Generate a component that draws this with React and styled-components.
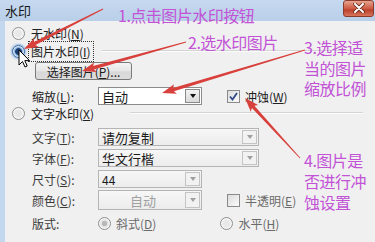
import React from 'react';
import styled, { createGlobalStyle } from 'styled-components';

const GlobalStyle = createGlobalStyle`
  body {
    margin: 0;
    background: #f0f0f0;
    font-family: "Noto Sans CJK SC", "Noto Sans", sans-serif;
  }
`;

const Window = styled.div`
  position: relative;
  width: 375px;
  height: 242px;
  overflow: hidden;
  display: flex;
  flex-direction: column;
  background: #c3d7ee;
`;

const TitleBar = styled.div`
  height: 21px;
  flex-shrink: 0;
  display: flex;
  align-items: center;
  padding: 0 1px 0 5px;
  background: linear-gradient(#c6d9ef, #b9cfe9);
`;

const Title = styled.span`
  font-size: 13px;
  color: #151515;
  line-height: 1;
`;

const CloseButton = styled.div`
  margin-left: auto;
  margin-top: -5px;
  width: 29px;
  height: 15px;
  border: 1px solid #8b3a2c;
  border-radius: 3px;
  background: linear-gradient(#e6a590, #cd5a43 50%, #b9412c 60%, #d8745a);
  display: flex;
  align-items: center;
  justify-content: center;
`;

const Body = styled.div`
  flex: 1;
  margin-left: 5px;
  background: #f0f0f0;
  display: flex;
  flex-direction: column;
  padding-top: 3px;
  font-size: 12px;
  color: #202020;
`;

const OptionRow = styled.div`
  height: ${p => p.$h || 18}px;
  margin-top: ${p => p.$mt || 0}px;
  display: flex;
  align-items: center;
  padding-left: 7px;
`;

const FieldRow = styled.div`
  height: ${p => p.$h || 18}px;
  margin-top: ${p => p.$mt || 0}px;
  display: flex;
  align-items: center;
  padding-left: 27px;
`;

const Label = styled.span`
  width: 66px;
  flex-shrink: 0;
  color: ${p => (p.$dim ? '#3a3a3a' : '#202020')};
  white-space: nowrap;
`;

const Text = styled.span`
  white-space: nowrap;
  color: ${p => (p.$dim ? '#6a6a6a' : '#202020')};
  margin-left: ${p => p.$ml || 0}px;
`;

const FocusText = styled.span`
  margin-left: 3px;
  padding: 1px 2px;
  border: 1px dotted #333;
  white-space: nowrap;
`;

const Radio = styled.span`
  width: 11px;
  height: 11px;
  flex-shrink: 0;
  border-radius: 50%;
  border: 1px solid ${p => (p.$on ? '#3a6aa6' : '#8e8f8f')};
  background: ${p =>
    p.$on
      ? 'radial-gradient(circle, #1d3f72 0 3px, #6a9bd2 3.5px, #d7e6f5 5px)'
      : p.$dis
      ? 'radial-gradient(circle, #b8b8b8 0 2.5px, #e2e2e2 3px, #f4f4f4 5px)'
      : 'radial-gradient(circle, #e8e8e8 0 3px, #f6f6f6 5px)'};
  box-shadow: ${p => (p.$on ? '0 0 2px 1px #8fb7e4' : 'none')};
`;

const Check = styled.span`
  width: 11px;
  height: 11px;
  flex-shrink: 0;
  border: 1px solid #8a8a8a;
  background: linear-gradient(135deg, #dcdcdc, #fafafa);
  display: flex;
  align-items: center;
  justify-content: center;
`;

const Separator = styled.div`
  flex: 1;
  height: 0;
  border-top: 1px solid #d4d4d4;
  border-bottom: 1px solid #fbfbfb;
  margin: 0 12px 0 ${p => p.$ml || 8}px;
`;

const PushButton = styled.div`
  margin-left: 30px;
  margin-top: 2px;
  width: 95px;
  height: 16px;
  border: 1px solid #7a7a7a;
  border-radius: 3px;
  background: linear-gradient(#f4f4f4, #e6e6e6 50%, #d8d8d8 55%, #dcdcdc);
  display: flex;
  align-items: center;
  justify-content: center;
  white-space: nowrap;
`;

const Combo = styled.div`
  width: ${p => p.$w}px;
  height: ${p => p.$h || 18}px;
  box-sizing: border-box;
  flex-shrink: 0;
  display: flex;
  border: 1px solid ${p => (p.$dis ? '#b4b4b4' : '#8c8c8c')};
  background: ${p => (p.$dis ? 'linear-gradient(#f7f7f7, #ececec)' : '#ffffff')};
`;

const ComboText = styled.span`
  flex: 1;
  display: flex;
  align-items: center;
  justify-content: ${p => (p.$center ? 'center' : 'flex-start')};
  padding-left: 3px;
  font-size: ${p => p.$fs || 13}px;
  color: ${p => p.$c || '#1a1a1a'};
  white-space: nowrap;
  overflow: hidden;
`;

const DropButton = styled.span`
  width: 15px;
  flex-shrink: 0;
  margin: 1px;
  box-sizing: border-box;
  border: 1px solid ${p => (p.$dis ? '#c4c4c4' : '#8a8a8a')};
  background: ${p => (p.$dis ? '#f2f2f2' : 'linear-gradient(#f3f3f3, #dadada)')};
  display: flex;
  align-items: center;
  justify-content: center;

  &::after {
    content: '';
    border-left: 3.5px solid transparent;
    border-right: 3.5px solid transparent;
    border-top: 4px solid ${p => (p.$dis ? '#a0a0a0' : '#111')};
  }
`;

const Side = styled.div`
  display: flex;
  align-items: center;
  margin-left: ${p => p.$ml || 25}px;
`;

const Note = styled.div`
  position: absolute;
  left: ${p => p.$left}px;
  top: ${p => p.$top}px;
  width: ${p => p.$w || 200}px;
  font-size: 16px;
  line-height: ${p => p.$lh || 20}px;
  color: #c252d6;
  white-space: pre;
  letter-spacing: -0.5px;
`;

const Overlay = styled.svg`
  position: absolute;
  left: 0;
  top: 0;
  pointer-events: none;
`;

const arrowPoints = (x1, y1, x2, y2, w0 = 0.8, w1 = 3.4, hl = 12, hw = 10) => {
  const dx = x2 - x1;
  const dy = y2 - y1;
  const len = Math.hypot(dx, dy);
  const ux = dx / len;
  const uy = dy / len;
  const nx = -uy;
  const ny = ux;
  const bx = x2 - ux * hl;
  const by = y2 - uy * hl;
  const pts = [
    [x1 + (nx * w0) / 2, y1 + (ny * w0) / 2],
    [bx + (nx * w1) / 2, by + (ny * w1) / 2],
    [bx + (nx * hw) / 2 - ux * 2, by + (ny * hw) / 2 - uy * 2],
    [x2, y2],
    [bx - (nx * hw) / 2 - ux * 2, by - (ny * hw) / 2 - uy * 2],
    [bx - (nx * w1) / 2, by - (ny * w1) / 2],
    [x1 - (nx * w0) / 2, y1 - (ny * w0) / 2],
  ];
  return pts.map(p => p.map(v => v.toFixed(1)).join(',')).join(' ');
};

const arrows = [
  [103, 9, 24, 49],
  [186, 42, 82, 71],
  [305, 50, 162, 93],
  [300, 158, 245, 98],
];

const U = ({ children }) => <u style={{ textDecoration: 'underline' }}>{children}</u>;

const App = () => (
  <>
    <GlobalStyle />
    <Window>
      <TitleBar>
        <Title>水印</Title>
        <CloseButton>
          <svg width="12" height="10" viewBox="0 0 12 10">
            <path d="M2 1 L10 9 M10 1 L2 9" stroke="#5a1f14" strokeWidth="3.4" strokeLinecap="round" />
            <path d="M2 1 L10 9 M10 1 L2 9" stroke="#fff" strokeWidth="2" strokeLinecap="round" />
          </svg>
        </CloseButton>
      </TitleBar>

      <Body>
        <OptionRow>
          <Radio />
          <Text $ml={6}>无水印(<U>N</U>)</Text>
        </OptionRow>

        <OptionRow>
          <Radio $on />
          <FocusText>图片水印(<U>I</U>)</FocusText>
          <Separator />
        </OptionRow>

        <PushButton>选择图片(<U>P</U>)...</PushButton>

        <FieldRow $mt={7}>
          <Label>缩放(<U>L</U>):</Label>
          <Combo $w={104}>
            <ComboText>自动</ComboText>
            <DropButton />
          </Combo>
          <Side>
            <Check>
              <svg width="9" height="9" viewBox="0 0 9 9">
                <path d="M1 4.5 L3.5 7.5 L8 1" stroke="#2f4a86" strokeWidth="1.8" fill="none" />
              </svg>
            </Check>
            <Text $ml={5}>冲蚀(<U>W</U>)</Text>
          </Side>
        </FieldRow>

        <OptionRow $h={16}>
          <Radio />
          <Text $ml={6}>文字水印(<U>X</U>)</Text>
          <Separator $ml={36} />
        </OptionRow>

        <FieldRow $mt={7}>
          <Label $dim>文字(<U>T</U>):</Label>
          <Combo $w={161} $dis>
            <ComboText>请勿复制</ComboText>
            <DropButton $dis />
          </Combo>
        </FieldRow>

        <FieldRow $mt={3}>
          <Label $dim>字体(<U>F</U>):</Label>
          <Combo $w={161} $dis>
            <ComboText>华文行楷</ComboText>
            <DropButton $dis />
          </Combo>
        </FieldRow>

        <FieldRow $mt={3}>
          <Label $dim>尺寸(<U>S</U>):</Label>
          <Combo $w={104} $dis>
            <ComboText $fs={12}>44</ComboText>
            <DropButton $dis />
          </Combo>
        </FieldRow>

        <FieldRow $mt={2} $h={20}>
          <Label $dim>颜色(<U>C</U>):</Label>
          <Combo $w={104} $h={20} $dis>
            <ComboText $center $c="#a0a0a0">自动</ComboText>
            <DropButton $dis />
          </Combo>
          <Side>
            <Check />
            <Text $ml={5} $dim>半透明(<U>E</U>)</Text>
          </Side>
        </FieldRow>

        <FieldRow $mt={5} $h={16}>
          <Label $dim>版式:</Label>
          <Radio $dis />
          <Text $ml={5} $dim>斜式(<U>D</U>)</Text>
          <Side $ml={64}>
            <Radio />
            <Text $ml={5} $dim>水平(<U>H</U>)</Text>
          </Side>
        </FieldRow>
      </Body>

      <Note $left={118} $top={5}>1.点击图片水印按钮</Note>
      <Note $left={188} $top={32}>2.选水印图片</Note>
      <Note $left={304} $top={37} $w={70} $lh={20.5}>{'3.选择适\n当的图片\n缩放比例'}</Note>
      <Note $left={304} $top={150} $w={70} $lh={21}>{'4.图片是\n否进行冲\n蚀设置'}</Note>

      <Overlay width="375" height="242" viewBox="0 0 375 242">
        {arrows.map((a, i) => (
          <polygon key={i} points={arrowPoints(...a)} fill="#d8403c" />
        ))}
        <path
          transform="translate(19 50)"
          d="M0 0 L0 15 L3.5 11.5 L6 17 L8.2 16 L5.8 10.6 L10.5 10.6 Z"
          fill="#fff"
          stroke="#000"
          strokeWidth="1"
          strokeLinejoin="round"
        />
      </Overlay>
    </Window>
  </>
);

export default App;
